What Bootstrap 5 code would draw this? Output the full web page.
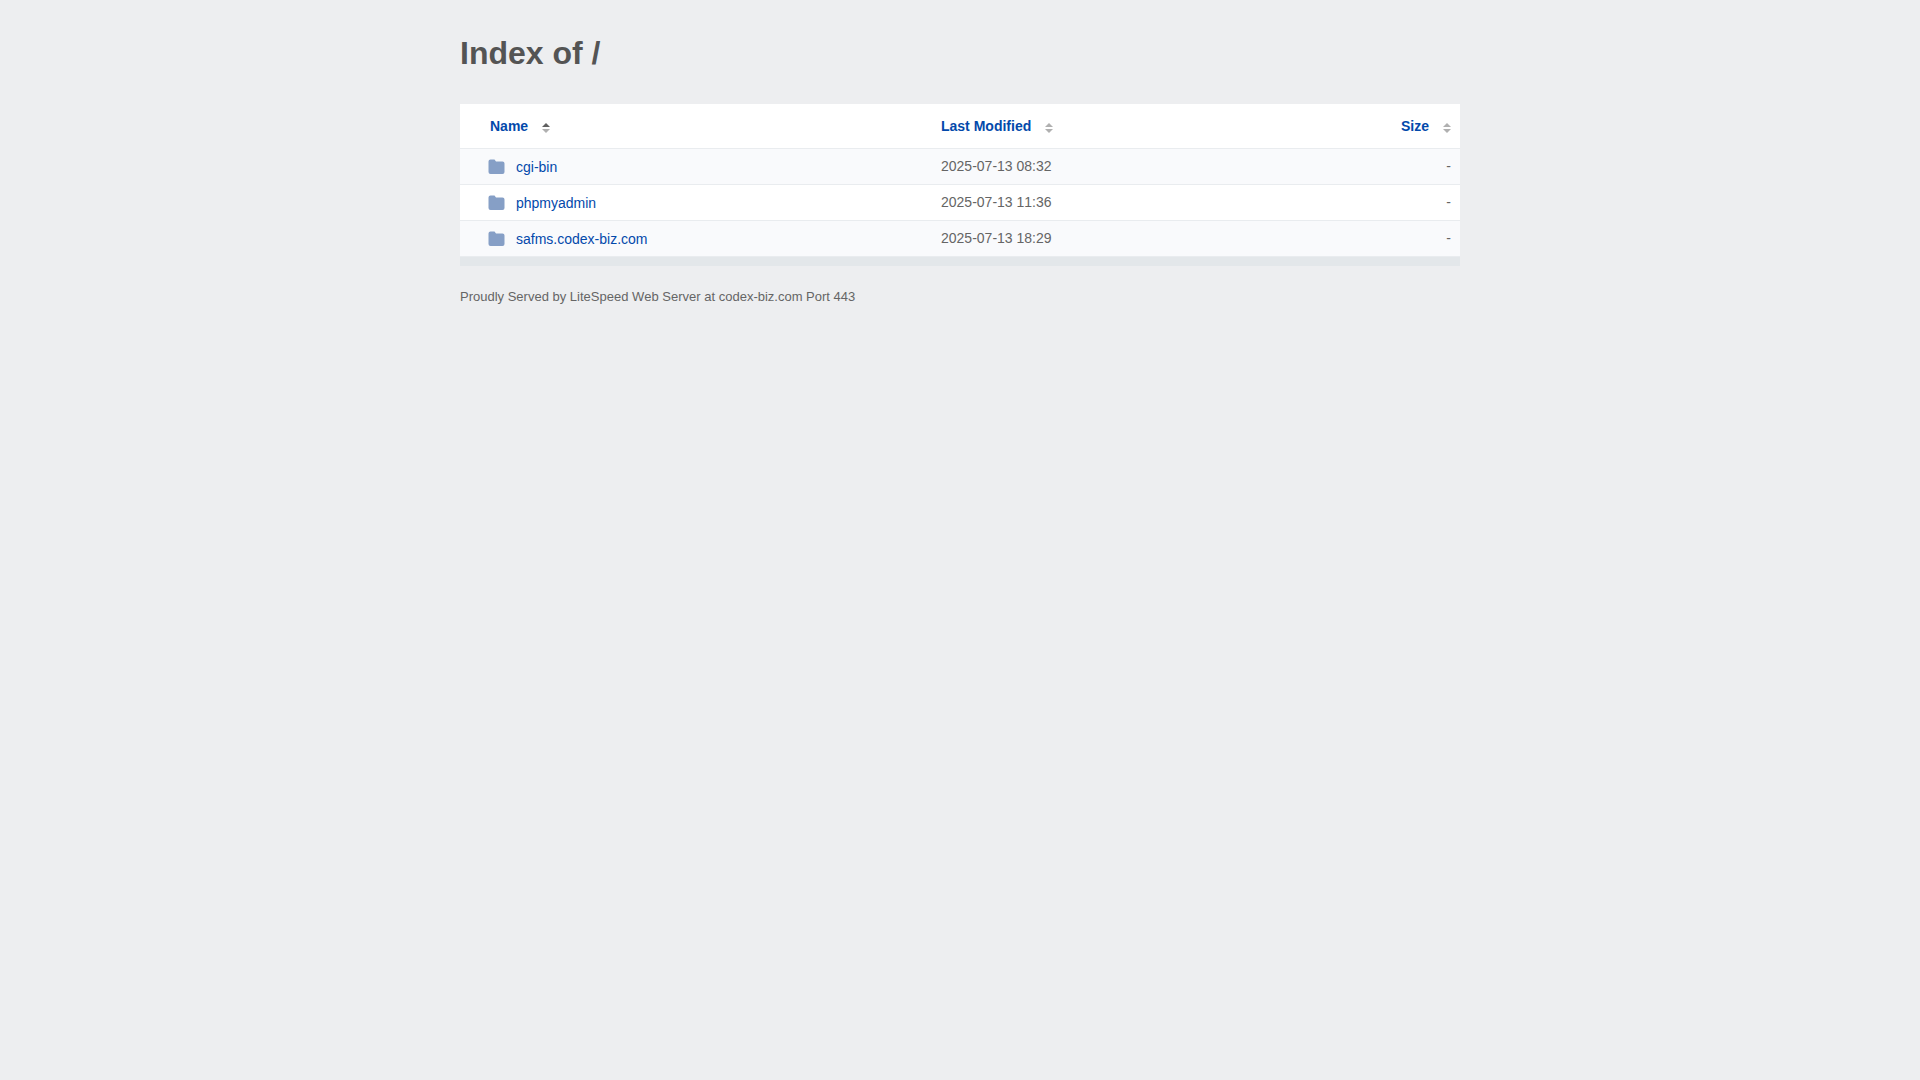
<!DOCTYPE html>
<html lang="en">
<head>
<meta charset="utf-8">
<meta name="viewport" content="width=device-width, initial-scale=1">
<title>Index of /</title>
<link rel="stylesheet" href="https://cdn.jsdelivr.net/npm/bootstrap@5.3.0/dist/css/bootstrap.min.css">
<style>
body { background: #edeef0; color: #545454; font-family: "Liberation Sans", Arial, sans-serif; font-size: 14px; line-height: 20px; font-kerning: none; }
a { color: #0349ab; }
.listing-page { max-width: 1000px; }
.listing-title { font-size: 32px; line-height: 40px; padding: 33px 0 31px; }
.listing-frame { border-bottom: 9px solid #e3e7ea; }
.listing { --bs-table-bg: #fff; --bs-table-color: #656565; }
.listing th, .listing td { padding: 7px 9px 8px; border-bottom: 1px solid #e9ecef; }
.listing th { padding: 12px 9px; }
.listing tbody tr:nth-child(odd) { --bs-table-bg: #f9fafc; }
.listing th:first-child { padding-left: 30px; }
.listing td:first-child { padding: 8px 9px 7px 28px; }
.col-name { width: 47.2%; }
.col-date { width: 35%; }
.entry { gap: 11px; }
.folder { width: 17px; height: 16px; fill: #869fc6; }
.sorter { width: 8px; height: 10px; margin: 4px 0 0 14px; fill: #b0b0b0; }
.sorter .active { fill: #606060; }
.served { font-size: 13px; color: #656565; padding-top: 21px; }
</style>
</head>
<body>
<main class="listing-page container-fluid px-0">
  <h1 class="listing-title fw-bold mb-0">Index of /</h1>
  <div class="listing-frame">
  <table class="listing table mb-0 align-middle">
    <thead>
      <tr>
        <th class="col-name" scope="col"><a class="text-decoration-none d-flex align-items-center" href="#">Name<svg class="sorter" viewBox="0 0 8 10" aria-hidden="true"><path class="active" d="M0 4 4 0l4 4z"/><path d="M0 6h8l-4 4z"/></svg></a></th>
        <th class="col-date" scope="col"><a class="text-decoration-none d-flex align-items-center" href="#">Last Modified<svg class="sorter" viewBox="0 0 8 10" aria-hidden="true"><path d="M0 4 4 0l4 4zM0 6h8l-4 4z"/></svg></a></th>
        <th scope="col"><a class="text-decoration-none d-flex align-items-center justify-content-end" href="#">Size<svg class="sorter" viewBox="0 0 8 10" aria-hidden="true"><path d="M0 4 4 0l4 4zM0 6h8l-4 4z"/></svg></a></th>
      </tr>
    </thead>
    <tbody>
      <tr>
        <td><a class="entry text-decoration-none d-flex align-items-center" href="#"><svg class="folder" viewBox="0 0 17 16" aria-hidden="true"><path d="M2.500 .5h4L8 2.500h6.500Q16.500 2.500 16.500 4.500v8.500Q16.500 15 14.500 15h-12Q.5 15 .5 13V2.500Q.5 .5 2.500 .5z"/></svg>cgi-bin</a></td>
        <td>2025-07-13 08:32</td>
        <td class="text-end">-</td>
      </tr>
      <tr>
        <td><a class="entry text-decoration-none d-flex align-items-center" href="#"><svg class="folder" viewBox="0 0 17 16" aria-hidden="true"><path d="M2.500 .5h4L8 2.500h6.500Q16.500 2.500 16.500 4.500v8.500Q16.500 15 14.500 15h-12Q.5 15 .5 13V2.500Q.5 .5 2.500 .5z"/></svg>phpmyadmin</a></td>
        <td>2025-07-13 11:36</td>
        <td class="text-end">-</td>
      </tr>
      <tr>
        <td><a class="entry text-decoration-none d-flex align-items-center" href="#"><svg class="folder" viewBox="0 0 17 16" aria-hidden="true"><path d="M2.500 .5h4L8 2.500h6.500Q16.500 2.500 16.500 4.500v8.500Q16.500 15 14.500 15h-12Q.5 15 .5 13V2.500Q.5 .5 2.500 .5z"/></svg>safms.codex-biz.com</a></td>
        <td>2025-07-13 18:29</td>
        <td class="text-end">-</td>
      </tr>
    </tbody>
  </table>
  </div>
  <footer class="served">Proudly Served by LiteSpeed Web Server at codex-biz.com Port 443</footer>
</main>
<script src="https://cdn.jsdelivr.net/npm/bootstrap@5.3.0/dist/js/bootstrap.bundle.min.js"></script>
</body>
</html>
